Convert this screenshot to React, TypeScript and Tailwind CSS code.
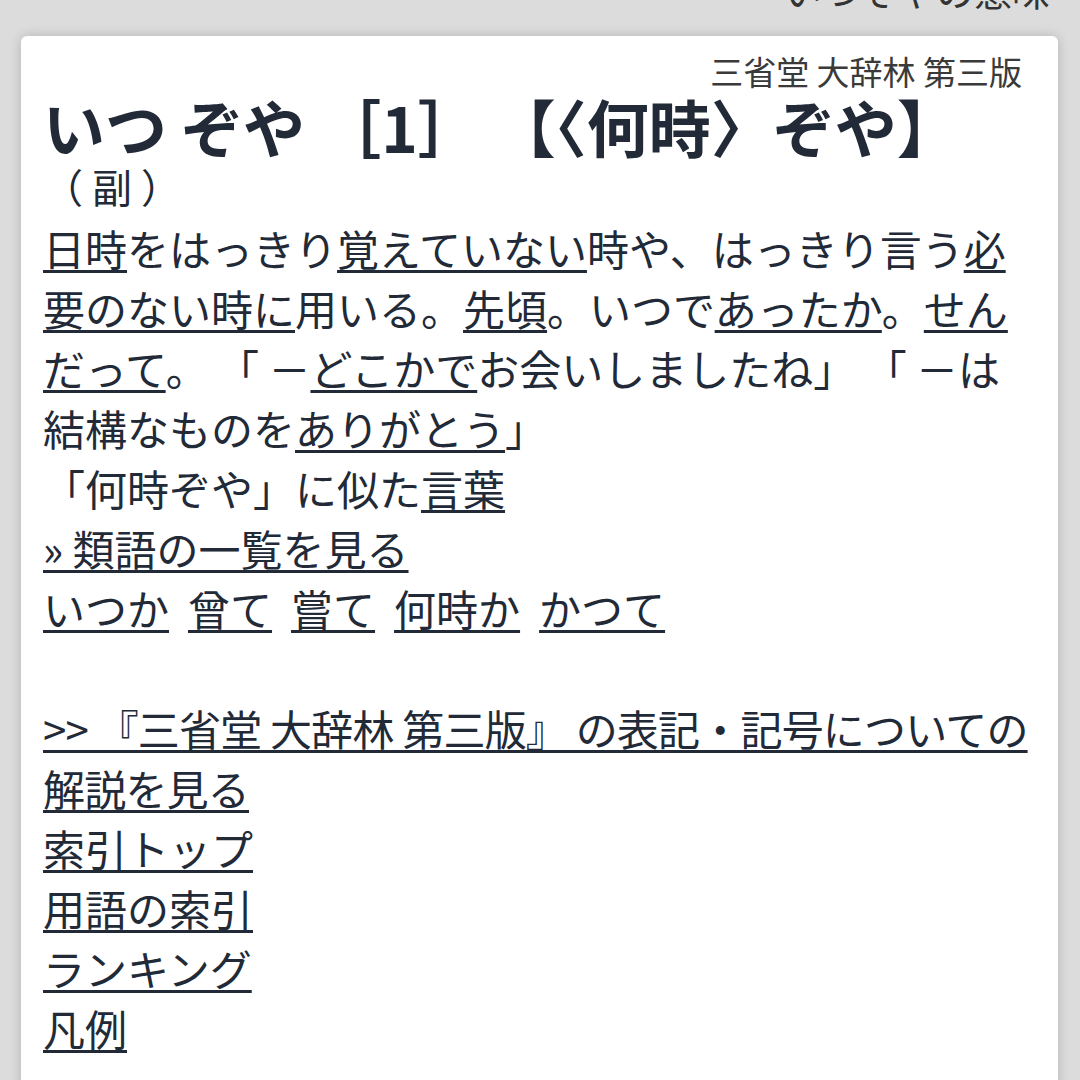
import React from "react";

const U = ({ children }: { children: React.ReactNode }) => (
  <span className="underline decoration-[3px] underline-offset-[4px]">{children}</span>
);

export default function App() {
  return (
    <div
      className="min-h-[1080px] h-[1080px] overflow-hidden bg-[#dcdcdc] text-[#222a38]"
      style={{ fontFamily: '"Noto Sans CJK JP", "Noto Sans", sans-serif' }}
    >
      <div className="-mt-[32px] pr-[30px] text-right text-[38px] leading-[44px] text-[#333]">
        いつぞやの意味
      </div>
      <div className="mt-[24px] ml-[21px] mr-[22px] rounded-[6px] bg-white pt-[15px] pl-[22px] pr-[21px] pb-[40px] shadow-[0_0_12px_rgba(0,0,0,0.18)]">
        <div className="text-right pr-[15px] text-[33px] leading-[40px] text-[#3a3a3a]">
          三省堂 大辞林 第三版
        </div>
        <h1 className="-mt-[1px] text-[62px] leading-[72px] font-bold">
          いつ ぞや ［1］ 【〈何時〉ぞや】
        </h1>
        <div className="text-[40px] leading-[56px] -mt-[4px]">（ 副 ）</div>
        <div className="mt-[4px] text-[42px] leading-[60px]">
          <p>
            <U>日時</U>をはっきり<U>覚えていない</U>時や、はっきり言う<U>必要のない時に</U>用いる。<U>先頃</U>。いつで<U>あったか</U>。<U>せんだって</U>。 「 －<U>どこかで</U>お会いしましたね」 「 －は結構なものを<U>ありがとう</U>」
          </p>
          <p>「何時ぞや」に似た<U>言葉</U></p>
          <p>
            <U>» 類語の一覧を見る</U>
          </p>
          <div className="flex flex-wrap gap-x-[19px]">
            <U>いつか</U>
            <U>曾て</U>
            <U>嘗て</U>
            <U>何時か</U>
            <U>かつて</U>
          </div>
          <div className="h-[60px]" />
          <p className="tracking-[-0.8px]">
            <U>&gt;&gt; 『三省堂 大辞林 第三版』 の表記・記号についての解説を見る</U>
          </p>
          <p>
            <U>索引トップ</U>
          </p>
          <p>
            <U>用語の索引</U>
          </p>
          <p>
            <U>ランキング</U>
          </p>
          <p>
            <U>凡例</U>
          </p>
        </div>
      </div>
    </div>
  );
}
